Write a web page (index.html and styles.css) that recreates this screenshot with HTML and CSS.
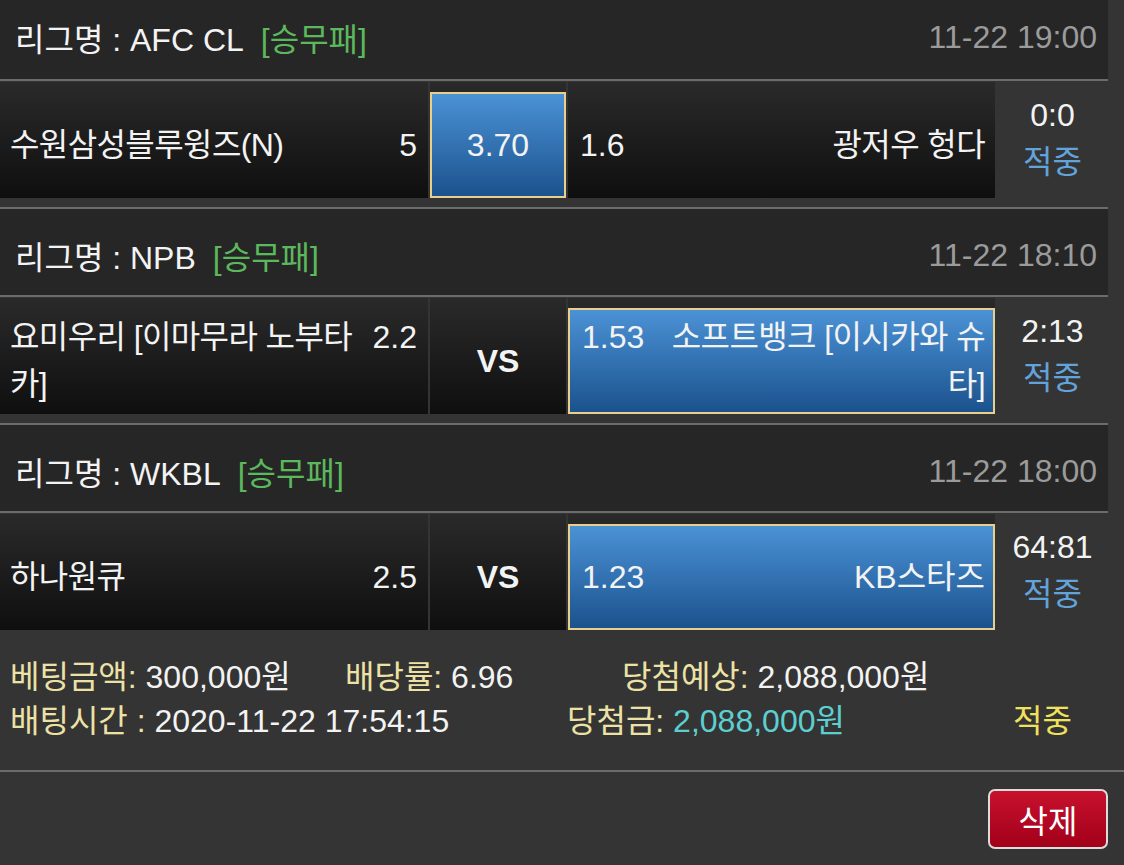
FILE: index.html
```html
<!DOCTYPE html>
<html lang="ko">
<head>
<meta charset="utf-8">
<title>배팅내역</title>
<link rel="stylesheet" href="styles.css">
</head>
<body>
<div class="games">
  <section class="game">
    <div class="league league-first">
      <span class="league-name">리그명 : AFC CL</span>
      <span class="league-type">[승무패]</span>
      <span class="league-date">11-22 19:00</span>
    </div>
    <div class="match">
      <div class="cell cell-home">
        <div class="cell-body">
          <span class="team ko">수원삼성블루윙즈(N)</span>
          <span class="odds">5</span>
        </div>
      </div>
      <div class="cell cell-mid cell-picked">
        <div class="pick pick-center">3.70</div>
      </div>
      <div class="cell cell-away">
        <div class="cell-body">
          <span class="odds odds-left">1.6</span>
          <span class="team team-right ko">광저우 헝다</span>
        </div>
      </div>
      <div class="result">
        <span class="score">0:0</span>
        <span class="status">적중</span>
      </div>
    </div>
  </section>

  <section class="game">
    <div class="league">
      <span class="league-name">리그명 : NPB</span>
      <span class="league-type">[승무패]</span>
      <span class="league-date">11-22 18:10</span>
    </div>
    <div class="match">
      <div class="cell cell-home">
        <div class="cell-body cell-body-top">
          <span class="team team-npb-home ko">요미우리 [이마무라 노부타카]</span>
          <span class="odds">2.2</span>
        </div>
      </div>
      <div class="cell cell-mid">
        <span class="vs">VS</span>
      </div>
      <div class="cell cell-away cell-picked">
        <div class="pick">
          <div class="cell-body cell-body-top">
            <span class="odds odds-left">1.53</span>
            <span class="team team-right team-npb-away ko">소프트뱅크 [이시카와 슈타]</span>
          </div>
        </div>
      </div>
      <div class="result">
        <span class="score">2:13</span>
        <span class="status">적중</span>
      </div>
    </div>
  </section>

  <section class="game game-last">
    <div class="league">
      <span class="league-name">리그명 : WKBL</span>
      <span class="league-type">[승무패]</span>
      <span class="league-date">11-22 18:00</span>
    </div>
    <div class="match">
      <div class="cell cell-home">
        <div class="cell-body">
          <span class="team ko">하나원큐</span>
          <span class="odds">2.5</span>
        </div>
      </div>
      <div class="cell cell-mid">
        <span class="vs">VS</span>
      </div>
      <div class="cell cell-away cell-picked">
        <div class="pick">
          <div class="cell-body">
            <span class="odds odds-left">1.23</span>
            <span class="team team-right">KB스타즈</span>
          </div>
        </div>
      </div>
      <div class="result">
        <span class="score">64:81</span>
        <span class="status">적중</span>
      </div>
    </div>
  </section>
</div>

<div class="summary">
  <div class="sum-line">
    <span class="sum-item s-bet"><span class="lbl">베팅금액:</span> 300,000원</span>
    <span class="sum-item s-rate"><span class="lbl">배당률:</span> 6.96</span>
    <span class="sum-item"><span class="lbl">당첨예상:</span> 2,088,000원</span>
  </div>
  <div class="sum-line">
    <span class="sum-item s-time"><span class="lbl">배팅시간 :</span> 2020-11-22 17:54:15</span>
    <span class="sum-item s-win"><span class="lbl">당첨금:</span> <span class="win-amt">2,088,000원</span></span>
    <span class="sum-item hit">적중</span>
  </div>
</div>

<div class="actions">
  <button class="btn-del" type="button">삭제</button>
</div>
</body>
</html>
```

FILE: styles.css
```css
html, body {
  margin: 0;
  padding: 0;
}

body {
  width: 1124px;
  height: 865px;
  overflow: hidden;
  background: #343434;
  color: #f3f3f3;
  font-family: "Liberation Sans", "Noto Sans CJK KR", Arial, sans-serif;
  font-size: 32px;
}

.games {
  width: 1108px;
}

.league {
  display: flex;
  align-items: center;
  box-sizing: border-box;
  height: 88px;
  padding: 6px 11px 0 15px;
  background: #262626;
  border-bottom: 2px solid #6c6c6c;
  white-space: nowrap;
}

.league-first {
  height: 81px;
  padding-top: 0;
  padding-bottom: 5px;
}

.league-type {
  margin-left: 17px;
  color: #5cb85c;
}

.league-date {
  margin-left: auto;
  color: #9b9b9b;
}

.match {
  display: flex;
  gap: 2px;
  padding: 1px 0 9px;
  border-bottom: 2px solid #6c6c6c;
}

.game-last .match {
  padding-bottom: 0;
  border-bottom: 0;
}

.cell {
  box-sizing: border-box;
  height: 116px;
  padding-top: 10px;
  background: linear-gradient(#2a2a2a, #0f0f0f);
  display: flex;
  align-items: center;
}

.cell-home {
  width: 428px;
  padding-left: 10px;
  padding-right: 11px;
}

.cell-mid {
  width: 136px;
  justify-content: center;
}

.cell-away {
  width: 427px;
  padding-left: 12px;
  padding-right: 10px;
}

.cell-picked {
  padding-left: 0;
  padding-right: 0;
  align-items: stretch;
}

.pick {
  flex: 1;
  box-sizing: border-box;
  border: 2px solid #e8d08c;
  background: linear-gradient(#4b92d6, #1b528d);
  display: flex;
  align-items: center;
  padding: 0 8px 0 12px;
}

.pick-center {
  justify-content: center;
  padding: 0;
}

.cell-body {
  flex: 1;
  display: flex;
  align-items: center;
  line-height: 47px;
}

.cell-body-top {
  align-items: flex-start;
}

.team {
  flex: 1;
  min-width: 0;
}

.ko {
  letter-spacing: -0.6px;
}

.team-right {
  text-align: right;
}

.team-npb-home {
  flex: 0 1 358px;
  margin-right: auto;
}

.team-npb-away {
  flex: 0 1 326px;
  margin-left: auto;
}

.odds {
  flex: none;
}

.vs {
  font-weight: bold;
  font-size: 32px;
}

.result {
  flex: 1;
  display: flex;
  flex-direction: column;
  align-items: center;
  padding-top: 10px;
  line-height: 47px;
}

.status {
  color: #62a3dc;
}

.summary {
  padding: 25px 0 27px 10px;
  line-height: 44px;
  border-bottom: 2px solid #6c6c6c;
  white-space: nowrap;
}

.sum-line {
  display: flex;
}

.lbl {
  color: #ece2a6;
}

.s-bet {
  width: 335px;
}

.s-rate {
  width: 277px;
}

.s-time {
  width: 557px;
}

.s-win {
  width: 446px;
}

.win-amt {
  color: #5ccfd0;
}

.hit {
  color: #f1e15c;
}

.actions {
  display: flex;
  justify-content: flex-end;
  padding: 17px 16px 0 0;
}

.btn-del {
  width: 120px;
  height: 60px;
  border: 2px solid #dcdcdc;
  border-radius: 7px;
  background: linear-gradient(#c8112d, #a2001a);
  color: #ffffff;
  font-family: "Liberation Sans", "Noto Sans CJK KR", Arial, sans-serif;
  font-size: 32px;
  padding: 0;
}
```
